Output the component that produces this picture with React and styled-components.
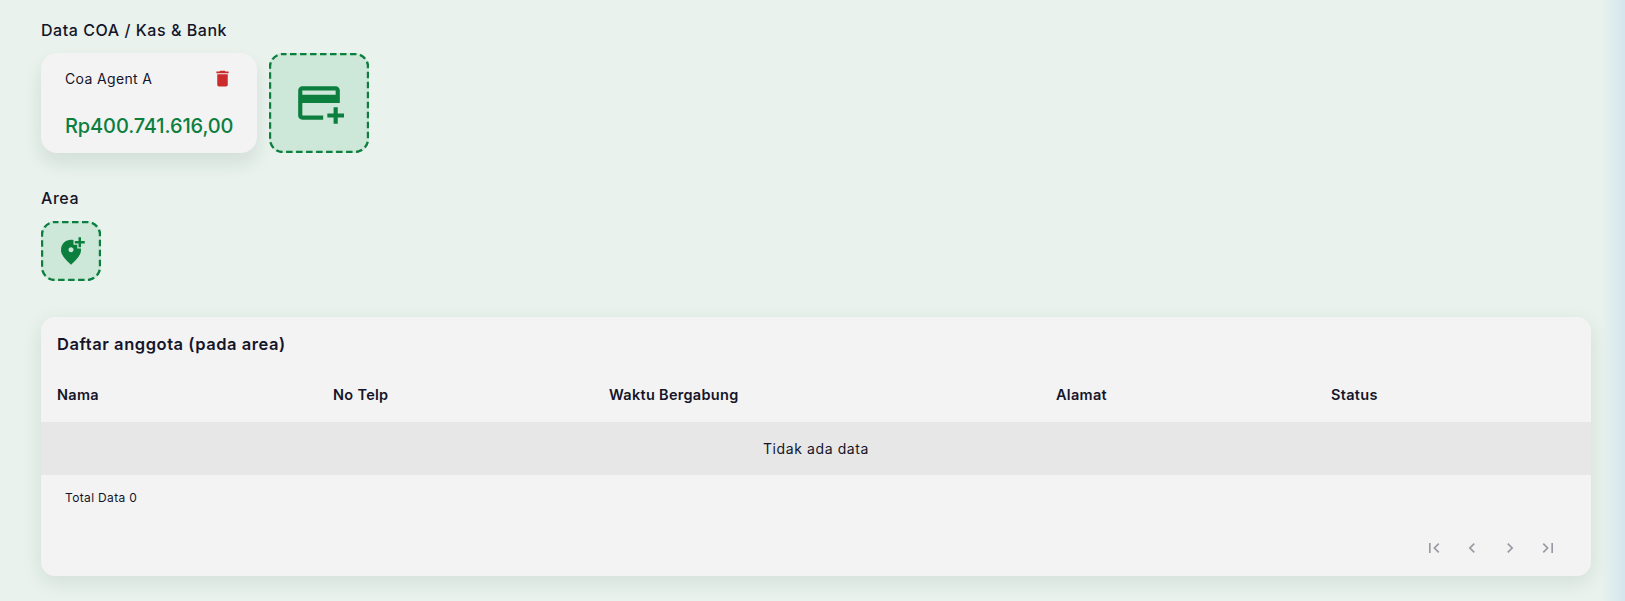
import styled, { createGlobalStyle } from 'styled-components'
import { MdAddCard, MdAddLocationAlt, MdDelete, MdFirstPage, MdLastPage, MdChevronLeft, MdChevronRight } from 'react-icons/md'

const GlobalStyle = createGlobalStyle`
    html, body { margin: 0; padding: 0; height: 100%; overflow: hidden; }
    body {
        background: linear-gradient(to right, #e9f2ed calc(100% - 24px), #d3e6ee);
        color: #15152a;
        font-family: Inter, "Liberation Sans", sans-serif;
    }
`

const Page = styled.div`
    display: flex;
    flex-direction: column;
    width: 1550px;
    padding: 19px 0 0 41px;
`

const SectionTitle = styled.div`
    font-size: 16px;
    font-weight: 500;
    letter-spacing: 0.55px;
    line-height: 22px;
    margin-bottom: 12px;
`

const Row = styled.div`
    display: flex;
    gap: 12px;
    margin-bottom: 34px;
`

const CoaCard = styled.div`
    display: flex;
    flex-direction: column;
    justify-content: space-between;
    box-sizing: border-box;
    width: 216px;
    height: 100px;
    padding: 15px 24px 14px 24px;
    background: #f3f3f3;
    border-radius: 16px;
    box-shadow: 0 10px 18px rgba(20, 60, 40, 0.1);
`

const CardHead = styled.div`
    display: flex;
    align-items: center;
    justify-content: space-between;
    font-size: 14px;
    letter-spacing: 0.35px;
    color: #15152a;
    svg { color: #cc2b2b; }
`

const Balance = styled.div`
    font-size: 20px;
    font-weight: 500;
    letter-spacing: -0.12px;
    color: #0c7f3f;
    white-space: nowrap;
    line-height: 26px;
`

const AddBoxFrame = styled.div`
    position: relative;
    display: flex;
    align-items: center;
    justify-content: center;
    width: ${props => props.size}px;
    height: ${props => props.size}px;
    background: #cde7d9;
    border-radius: 14px;
    color: #0c7f3f;
`

const DashedEdge = styled.svg`
    position: absolute;
    inset: 0;
    width: 100%;
    height: 100%;
    rect {
        fill: none;
        stroke: #0c7f3f;
        stroke-width: 2.4;
        stroke-dasharray: 6.5 3.5;
        stroke-dashoffset: 3;
    }
`

const AddBox = ({ size, children }) => (
    <AddBoxFrame size={size}>
        <DashedEdge>
            <rect x="1" y="1" width={size - 2} height={size - 2} rx="13" />
        </DashedEdge>
        {children}
    </AddBoxFrame>
)

const Panel = styled.div`
    display: flex;
    flex-direction: column;
    height: 259px;
    margin-top: 2px;
    background: #f3f3f3;
    border-radius: 14px;
    box-shadow: 0 6px 20px rgba(20, 60, 40, 0.1);
`

const PanelTitle = styled.div`
    padding: 16px 16px 0;
    font-size: 16.5px;
    font-weight: 600;
    letter-spacing: 0.55px;
    line-height: 22px;
    color: #15152a;
`

const HeaderRow = styled.div`
    display: grid;
    grid-template-columns: 276px 276px 447px 275px 276px;
    box-sizing: border-box;
    height: 54px;
    margin-top: 13px;
    padding-bottom: 2px;
    align-items: center;
`

const HeaderCell = styled.div`
    padding-left: 16px;
    font-size: 14.5px;
    font-weight: 600;
    letter-spacing: 0.3px;
    color: #15152a;
`

const EmptyRow = styled.div`
    display: flex;
    align-items: center;
    justify-content: center;
    box-sizing: border-box;
    height: 53px;
    padding-bottom: 1px;
    background: #e7e7e7;
    font-size: 14px;
    letter-spacing: 0.6px;
    color: #15152a;
`

const TotalData = styled.div`
    padding: 14px 24px 0;
    font-size: 12px;
    letter-spacing: 0.35px;
    line-height: 18px;
    color: #15152a;
`

const Pager = styled.div`
    display: flex;
    justify-content: flex-end;
    gap: 14px;
    margin-top: auto;
    padding: 0 31px 16px 0;
    color: #9a9aa3;
`

const PagerButton = styled.div`
    display: flex;
    align-items: center;
    justify-content: center;
    width: 24px;
    height: 24px;
`

const columns = ['Nama', 'No Telp', 'Waktu Bergabung', 'Alamat', 'Status']

export default function App() {
    return (
        <Page>
            <GlobalStyle />
            <SectionTitle>Data COA / Kas &amp; Bank</SectionTitle>
            <Row>
                <CoaCard>
                    <CardHead>
                        <span>Coa Agent A</span>
                        <MdDelete size={21} />
                    </CardHead>
                    <Balance>Rp400.741.616,00</Balance>
                </CoaCard>
                <AddBox size={100}><MdAddCard size={50} /></AddBox>
            </Row>
            <SectionTitle>Area</SectionTitle>
            <Row>
                <AddBox size={60}><MdAddLocationAlt size={30} /></AddBox>
            </Row>
            <Panel>
                <PanelTitle>Daftar anggota (pada area)</PanelTitle>
                <HeaderRow>
                    {columns.map(name => <HeaderCell key={name}>{name}</HeaderCell>)}
                </HeaderRow>
                <EmptyRow>Tidak ada data</EmptyRow>
                <TotalData>Total Data 0</TotalData>
                <Pager>
                    <PagerButton><MdFirstPage size={20} /></PagerButton>
                    <PagerButton><MdChevronLeft size={20} /></PagerButton>
                    <PagerButton><MdChevronRight size={20} /></PagerButton>
                    <PagerButton><MdLastPage size={20} /></PagerButton>
                </Pager>
            </Panel>
        </Page>
    )
}
